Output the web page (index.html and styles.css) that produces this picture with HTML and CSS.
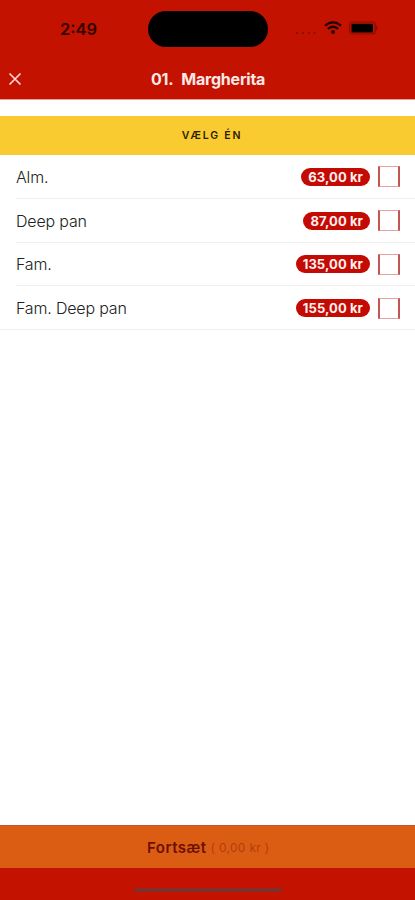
FILE: index.html
```html
<!DOCTYPE html>
<html lang="da">
<head>
<meta charset="utf-8">
<meta name="viewport" content="width=device-width, initial-scale=1">
<title>Margherita</title>
<link rel="stylesheet" href="styles.css">
</head>
<body>
<div class="screen">
  <header class="header">
    <div class="status">
      <span class="time">2:49</span>
      <span class="island"></span>
      <div class="indicators">
        <svg class="signal" width="21" height="3" viewBox="0 0 21 3"><path d="M0 0h2v2H0zM6 0h2v2H6zM12 0h2v2h-2zM17.500 0h2v2h-2z"/></svg>
        <svg class="wifi" width="18" height="14" viewBox="0 0 18 14"><path d="M1 4.600Q9-2.200 17 4.600M3.900 7.800Q9 3.600 14.100 7.800"/><circle cx="9" cy="11" r="1.900"/></svg>
        <svg class="battery" width="30" height="14" viewBox="0 0 30 14"><rect class="shell" x=".7" y="1" width="25.500" height="12" rx="3"/><rect x="2.500" y="2.800" width="21.500" height="8.600" rx="1"/><path class="cap" d="M27 4.500q3 2.500 0 5z"/></svg>
      </div>
    </div>
    <div class="nav">
      <svg class="close" width="14" height="14" viewBox="0 0 14 14"><path d="M1.500 1.500l11 11M12.500 1.500l-11 11"/></svg>
      <h1 class="title"><span>01.</span><span>Margherita</span></h1>
    </div>
  </header>
  <main class="content">
    <h2 class="section">VÆLG ÉN</h2>
    <ul class="options">
      <li class="option"><span class="name">Alm.</span><span class="price">63,00 kr</span><span class="check"></span></li>
      <li class="option"><span class="name">Deep pan</span><span class="price">87,00 kr</span><span class="check"></span></li>
      <li class="option"><span class="name">Fam.</span><span class="price">135,00 kr</span><span class="check"></span></li>
      <li class="option"><span class="name">Fam. Deep pan</span><span class="price">155,00 kr</span><span class="check"></span></li>
    </ul>
  </main>
  <footer class="footer">
    <div class="continue"><strong>Fortsæt</strong><span class="total">( 0,00 kr )</span></div>
    <div class="home"><span class="bar"></span></div>
  </footer>
</div>
</body>
</html>
```
FILE: styles.css
```css
* { box-sizing: border-box; }
body {
  margin: 0;
  background: #fff;
  font-family: Inter, "Liberation Sans", sans-serif;
}
.screen {
  display: flex;
  flex-direction: column;
  width: 415px;
  height: 900px;
  overflow: hidden;
}
.header {
  height: 100px;
  border-bottom: 1px solid #ec9d98;
  background: #c41200;
}
.status {
  display: grid;
  grid-template-columns: 148px 120px 1fr;
  height: 58px;
  padding-top: 11px;
}
.time {
  padding: 8px 0 0 60px;
  color: #350400;
  font-size: 16.500px;
  line-height: 20px;
  font-weight: 600;
}
.island {
  height: 36px;
  border-radius: 18px;
  background: #000;
}
.indicators {
  display: flex;
  padding: 10px 0 0 28px;
}
.signal { margin-top: 11px; fill: #930d00; }
.wifi { margin-left: 7px; fill: #240200; }
.wifi path { fill: none; stroke: #240200; stroke-width: 2.300; }
.battery { margin-left: 7px; fill: #000; }
.battery .shell { fill: none; stroke: #870c00; stroke-width: 1.200; }
.battery .cap { fill: #870c00; }
.nav {
  display: grid;
  grid-template-columns: 151px 1fr;
  align-items: center;
  height: 41px;
}
.close {
  margin-left: 8px;
  fill: none;
  stroke: #ffdcd9;
  stroke-width: 1.600;
}
.title {
  display: flex;
  gap: 8px;
  margin: 0;
  color: #ffe9e7;
  font-size: 16px;
  line-height: 20px;
  font-weight: 700;
  letter-spacing: -0.230px;
}
.content { flex: 1; padding-top: 16px; }
.section {
  height: 39px;
  margin: 0;
  padding-left: 9px;
  background: #facb30;
  color: #2a2000;
  font-size: 10.500px;
  line-height: 40px;
  font-weight: 600;
  letter-spacing: 1.800px;
  text-align: center;
}
.options { margin: 0; padding: 0; list-style: none; }
.option {
  display: flex;
  align-items: center;
  height: 43.800px;
  margin-left: 16px;
  padding: 1px 15px 0 0;
  border-bottom: 1px solid #eee;
}
.option:last-child { margin-left: 0; padding-left: 16px; }
.name {
  flex: 1;
  color: #222;
  font-size: 16px;
  font-weight: 300;
  letter-spacing: -0.180px;
}
.price {
  height: 18px;
  margin-right: 8px;
  padding: 0 7px;
  border-radius: 9px;
  background: #c30b04;
  color: #fff0ef;
  font-size: 13px;
  line-height: 18px;
  font-weight: 700;
  letter-spacing: .1px;
}
.check {
  width: 22px;
  height: 21px;
  border: solid;
  border-width: 1px 2px;
  border-color: #e5a2a0 #c45552;
}
.footer { height: 75px; background: #c41200; }
.continue {
  display: flex;
  align-items: center;
  gap: 4px;
  height: 43px;
  padding-left: 147px;
  border-top: 1px solid #c85328;
  background: #db5d14;
  color: #6b1000;
  font-size: 15px;
}
.continue strong { font-weight: 600; letter-spacing: .5px; }
.total {
  color: #b63c0c;
  font-size: 12px;
  font-weight: 400;
  letter-spacing: .3px;
}
.home { display: flex; justify-content: center; padding-top: 20px; }
.bar { width: 148px; height: 4px; border-radius: 2px; background: #80302b; }
```
